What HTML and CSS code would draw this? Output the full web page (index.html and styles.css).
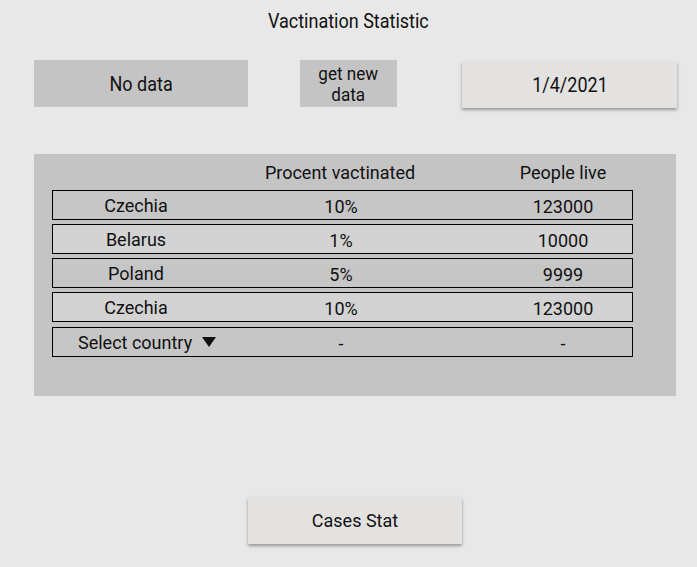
FILE: index.html
```html
<!DOCTYPE html>
<html lang="en">
<head>
<meta charset="utf-8">
<title>Vactination Statistic</title>
<link rel="stylesheet" href="styles.css">
</head>
<body>
<main class="app">
  <h1 class="title"><span class="narrow">Vactination Statistic</span></h1>
  <div class="toolbar">
    <div class="status"><span class="narrow">No data</span></div>
    <button class="fetch"><span class="narrow">get new<br>data</span></button>
    <button class="date"><span class="narrow">1/4/2021</span></button>
  </div>
  <section class="panel">
    <div class="head">
      <span></span>
      <span class="c2">Procent vactinated</span>
      <span class="c3">People live</span>
    </div>
    <div class="row dark"><span class="c1">Czechia</span><span class="c2">10%</span><span class="c3">123000</span></div>
    <div class="row light"><span class="c1">Belarus</span><span class="c2">1%</span><span class="c3">10000</span></div>
    <div class="row dark"><span class="c1">Poland</span><span class="c2">5%</span><span class="c3">9999</span></div>
    <div class="row light"><span class="c1">Czechia</span><span class="c2">10%</span><span class="c3">123000</span></div>
    <div class="row dark select"><span class="c1 pick">Select country <span class="caret"></span></span><span class="c2">-</span><span class="c3">-</span></div>
  </section>
  <div class="footer">
    <button class="cases">Cases Stat</button>
  </div>
</main>
</body>
</html>
```

FILE: styles.css
```css
* { box-sizing: border-box; }
html, body {
  margin: 0;
  background: #e8e8e8;
}
.app {
  width: 697px;
  height: 567px;
  font-family: Roboto, "Noto Sans", sans-serif;
  color: #111;
  overflow: hidden;
}
.narrow {
  display: inline-block;
  transform: scaleX(0.9);
}
.title {
  margin: 0;
  padding-top: 11px;
  font-size: 20px;
  font-weight: 400;
  line-height: 20px;
  text-align: center;
}
.toolbar {
  display: flex;
  align-items: flex-start;
  margin-top: 29px;
  padding-left: 34px;
  height: 48px;
}
.status, .fetch, .date, .cases {
  display: flex;
  align-items: center;
  justify-content: center;
  font-family: inherit;
  font-size: 18px;
  color: #111;
  border: none;
  padding: 0;
  text-align: center;
}
.status, .date { font-size: 20px; }
.status {
  width: 214px;
  height: 47px;
  background: #c4c4c4;
}
.fetch {
  width: 97px;
  height: 47px;
  margin-left: 52px;
  background: #c4c4c4;
  font-size: 19px;
  line-height: 21px;
}
.date {
  width: 215px;
  height: 47px;
  margin-left: 65px;
  margin-top: 1px;
  background: #e3e2e1;
  box-shadow: 0 2px 3px rgba(0,0,0,0.35);
}
.panel {
  margin-top: 46px;
  margin-left: 34px;
  width: 642px;
  height: 242px;
  background: #c4c4c4;
  padding: 0 0 0 18px;
  display: flex;
  flex-direction: column;
  gap: 4px;
}
.head, .row {
  display: grid;
  grid-template-columns: 166px 244px 1fr;
  align-items: center;
  width: 581px;
  font-size: 18px;
}
.head {
  height: 32px;
  padding-top: 4px;
}
.row {
  height: 30px;
  border: 1.5px solid #000;
}
.dark { background: #c6c6c6; }
.light { background: #d3d3d3; }
.select { margin-top: 1px; }
.c1, .c2, .c3 { text-align: center; }
.c3 { padding-left: 31px; }
.row .c2, .row .c3 { padding-top: 2px; }
.pick {
  text-align: left;
  padding-left: 25px;
  display: flex;
  align-items: center;
}
.caret {
  display: inline-block;
  width: 0;
  height: 0;
  margin-left: 10px;
  border-left: 7px solid transparent;
  border-right: 7px solid transparent;
  border-top: 10px solid #111;
}
.footer {
  margin-top: 101px;
  padding-left: 248px;
}
.cases {
  width: 214px;
  height: 47px;
  background: #e3e2e1;
  box-shadow: 0 2px 3px rgba(0,0,0,0.35);
}
```
